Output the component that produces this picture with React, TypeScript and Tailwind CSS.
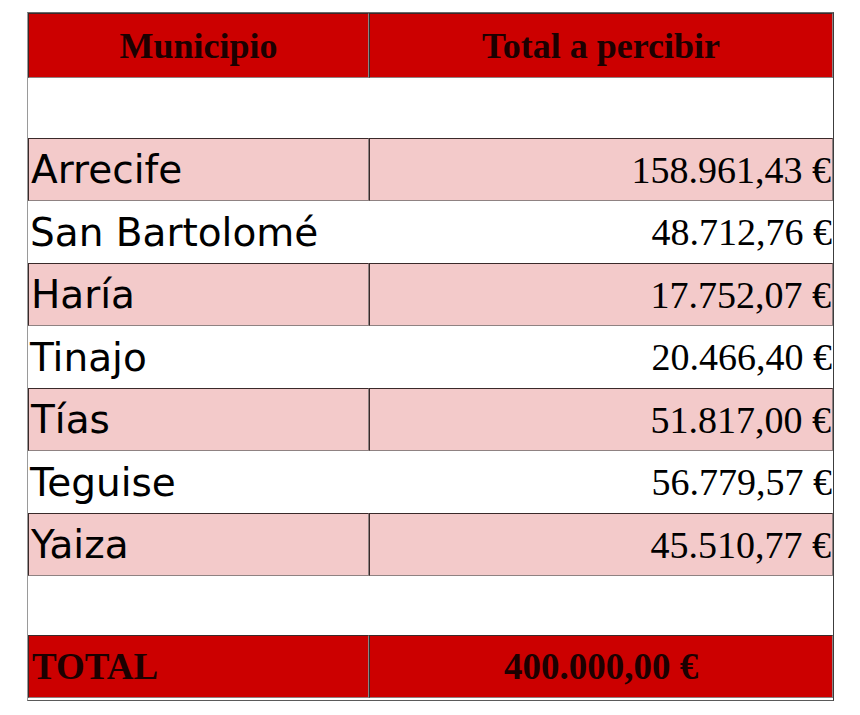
const rows = [
  { name: "Arrecife", amount: "158.961,43 €" },
  { name: "San Bartolomé", amount: "48.712,76 €" },
  { name: "Haría", amount: "17.752,07 €" },
  { name: "Tinajo", amount: "20.466,40 €" },
  { name: "Tías", amount: "51.817,00 €" },
  { name: "Teguise", amount: "56.779,57 €" },
  { name: "Yaiza", amount: "45.510,77 €" },
];

const sans = "font-['DejaVu_Sans',Verdana,sans-serif]";
const serif = "font-['Liberation_Serif','Times_New_Roman',serif]";

// inset look of the old html table cells
const colouredCell =
  "border-t border-l border-t-[#3a2a2a] border-l-[#3a2a2a] border-r border-b border-r-[#8f8282] border-b-[#8f8282]";

function HeaderRow() {
  return (
    <div className="flex h-[65px]">
      <div
        className={`flex w-[341px] items-center justify-center bg-[#cc0000] ${colouredCell}`}
      >
        <span className={`${serif} text-[36px] font-bold text-[#1c0000]`}>
          Municipio
        </span>
      </div>
      <div
        className={`flex flex-1 items-center justify-center bg-[#cc0000] ${colouredCell}`}
      >
        <span className={`${serif} text-[36px] font-bold text-[#1c0000]`}>
          Total a percibir
        </span>
      </div>
    </div>
  );
}

function DataRow({
  name,
  amount,
  shaded,
}: {
  name: string;
  amount: string;
  shaded: boolean;
}) {
  const cell = shaded ? `bg-[#f3caca] ${colouredCell}` : "bg-white";
  return (
    <div className={`flex ${shaded ? "h-[63px]" : "h-[62px]"}`}>
      <div className={`flex w-[341px] items-center pl-[2px] ${cell}`}>
        <span className={`${sans} text-[39px] leading-none text-black`}>
          {name}
        </span>
      </div>
      <div className={`flex flex-1 items-center justify-end pr-[1px] ${cell}`}>
        <span className={`${serif} text-[38px] leading-none text-black`}>
          {amount}
        </span>
      </div>
    </div>
  );
}

export default function App() {
  return (
    <div className="h-[715px] w-[860px] bg-white pt-[12px] pl-[27px]">
      <div className="w-[807px] border-t border-l border-t-[#6a6a6a] border-l-[#9a9a9a] border-r border-b border-r-[#3c3c3c] border-b-[#5a5a5a] pb-[2px]">
        <HeaderRow />
        <div className="h-[60px] bg-white" />
        {rows.map((r, i) => (
          <DataRow key={r.name} name={r.name} amount={r.amount} shaded={i % 2 === 0} />
        ))}
        <div className="h-[59px] bg-white" />
        <div className="flex h-[63px]">
          <div
            className={`flex w-[341px] items-center bg-[#cc0000] pl-[3px] ${colouredCell}`}
          >
            <span className={`${serif} text-[37px] font-bold text-[#1c0000]`}>
              TOTAL
            </span>
          </div>
          <div
            className={`flex flex-1 items-center justify-center bg-[#cc0000] ${colouredCell}`}
          >
            <span className={`${serif} text-[37px] font-bold text-[#1c0000]`}>
              400.000,00 €
            </span>
          </div>
        </div>
      </div>
    </div>
  );
}
